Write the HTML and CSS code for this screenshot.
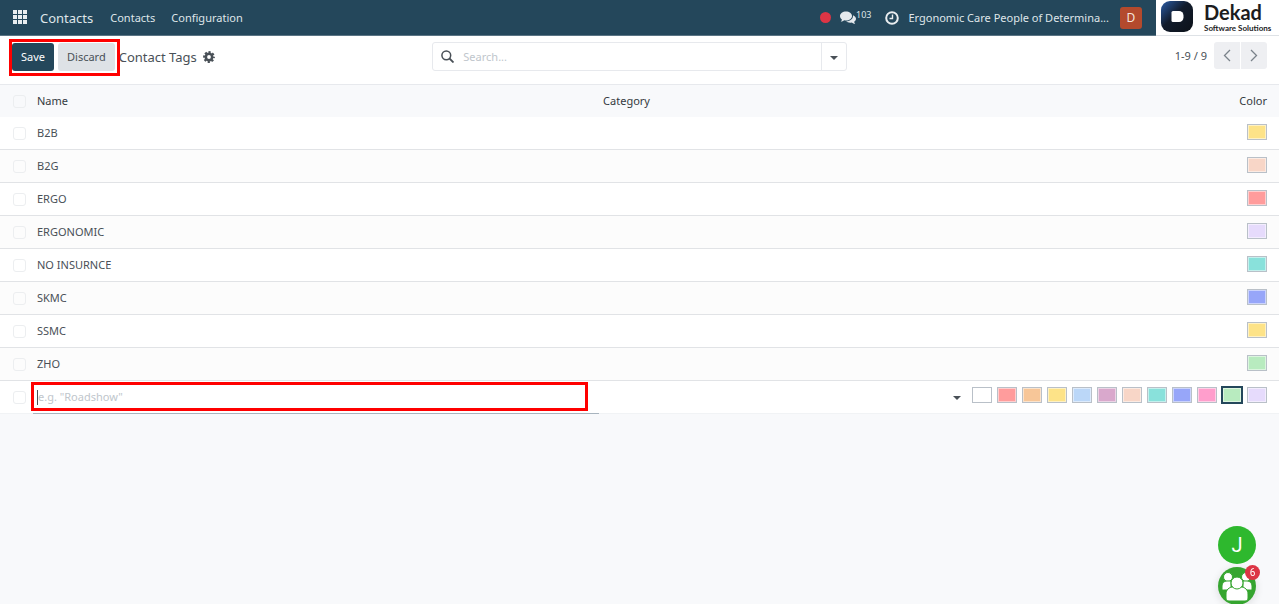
FILE: index.html
```html
<!DOCTYPE html>
<html lang="en">
<head>
    <meta charset="UTF-8">
    <meta name="viewport" content="width=device-width, initial-scale=1.0">
    <title>Contact Tags</title>
    <link rel="stylesheet" href="styles.css">
</head>
<body>
    <header class="navbar">
        <button class="apps" aria-label="Apps">
            <svg width="15" height="15" viewBox="0 0 15 15" fill="#e9edf0"><path d="M0 0h4v4H0zM5 0h4v4H5zM10 0h4v4h-4zM0 5h4v4H0zM5 5h4v4H5zM10 5h4v4h-4zM0 10h4v4H0zM5 10h4v4H5zM10 10h4v4h-4z"/></svg>
        </button>
        <a class="brand" href="#">Contacts</a>
        <nav class="menu">
            <a href="#">Contacts</a>
            <a href="#">Configuration</a>
        </nav>
        <div class="systray">
            <span class="dot"></span>
            <button class="messages" aria-label="Messages">
                <svg width="16" height="14" viewBox="0 0 16 14" fill="#e4e9ed"><path d="M6 0.500C9.300 0.500 12 2.500 12 5S9.300 9.500 6 9.500c-.6 0-1.200-.1-1.700-.2C3.300 10.100 2 10.600.8 10.700c.6-.6 1-1.300 1.100-2.200C.7 7.700 0 6.400 0 5 0 2.500 2.700.5 6 .5z"/><path d="M13 4.300c1.800.7 3 2 3 3.500 0 1.200-.8 2.300-1.900 3 .1.800.5 1.500 1.100 2-1.300 0-2.500-.5-3.400-1.300-.5.100-1 .2-1.600.2-1.700 0-3.200-.5-4.100-1.400C10 10.500 13.300 8 13 4.300z"/></svg>
                <span class="count">103</span>
            </button>
            <button class="activity" aria-label="Activities">
                <svg width="14" height="14" viewBox="0 0 14 14" fill="none" stroke="#e9edf0"><circle cx="7" cy="7" r="5.800" stroke-width="2"/><path d="M7.500 3.500v4H4.500" stroke-width="1.400"/></svg>
            </button>
            <button class="company">Ergonomic Care People of Determina...</button>
            <button class="avatar">D</button>
        </div>
        <a class="logo" href="#">
            <svg width="32" height="31" viewBox="0 0 32 31">
                <defs>
                    <linearGradient id="logo-bg" x1="0" y1="0" x2="1" y2="1">
                        <stop offset="0" stop-color="#2a5da8"/>
                        <stop offset=".45" stop-color="#121c2c"/>
                        <stop offset="1" stop-color="#0c1118"/>
                    </linearGradient>
                </defs>
                <rect width="32" height="31" rx="9" fill="url(#logo-bg)"/>
                <path d="M12 10h6a4.500 4.500 0 0 1 4.500 4.500v2a4.500 4.500 0 0 1-4.500 4.500H12a1.500 1.500 0 0 1-1.500-1.500v-8A1.500 1.500 0 0 1 12 10z" fill="#fff"/>
            </svg>
            <span class="logo-text"><b>Dekad</b><small>Software Solutions</small></span>
        </a>
    </header>

    <section class="control-panel">
        <div class="left">
            <div class="buttons">
                <button class="btn save">Save</button>
                <button class="btn discard">Discard</button>
            </div>
            <h1>Contact Tags</h1>
            <button class="gear" aria-label="Settings">
                <svg width="12" height="12" viewBox="0 0 12 12"><circle cx="6" cy="6" r="3.200" fill="none" stroke="#495057" stroke-width="2.600"/><circle cx="6" cy="6" r="4.900" fill="none" stroke="#495057" stroke-width="2" stroke-dasharray="2.200 1.648" stroke-dashoffset="1.100"/></svg>
            </button>
        </div>
        <div class="search">
            <svg width="13" height="13" viewBox="0 0 13 13" fill="none" stroke="#495057" stroke-width="1.500"><circle cx="5.300" cy="5.300" r="4.400"/><path d="M8.500 8.500l4 4" stroke-width="1.800"/></svg>
            <input type="search" placeholder="Search..." aria-label="Search">
            <button aria-label="Filters"><span class="caret"></span></button>
        </div>
        <div class="pager">
            <span>1-9 / 9</span>
            <button aria-label="Previous"><svg width="8" height="13" viewBox="0 0 8 13"><path d="M7 1L1.500 6.500 7 12"/></svg></button>
            <button aria-label="Next"><svg width="8" height="13" viewBox="0 0 8 13"><path d="M1 1l5.500 5.500L1 12"/></svg></button>
        </div>
    </section>

    <table class="list">
        <thead>
            <tr>
                <th class="check"><input type="checkbox" aria-label="Select all"></th>
                <th>Name</th>
                <th class="category">Category</th>
                <th class="color">Color</th>
            </tr>
        </thead>
        <tbody>
            <tr><td><input type="checkbox" aria-label="B2B"></td><td>B2B</td><td></td><td class="color"><span class="swatch c3"></span></td></tr>
            <tr><td><input type="checkbox" aria-label="B2G"></td><td>B2G</td><td></td><td class="color"><span class="swatch c6"></span></td></tr>
            <tr><td><input type="checkbox" aria-label="ERGO"></td><td>ERGO</td><td></td><td class="color"><span class="swatch c1"></span></td></tr>
            <tr><td><input type="checkbox" aria-label="ERGONOMIC"></td><td>ERGONOMIC</td><td></td><td class="color"><span class="swatch c11"></span></td></tr>
            <tr><td><input type="checkbox" aria-label="NO INSURNCE"></td><td>NO INSURNCE</td><td></td><td class="color"><span class="swatch c7"></span></td></tr>
            <tr><td><input type="checkbox" aria-label="SKMC"></td><td>SKMC</td><td></td><td class="color"><span class="swatch c8"></span></td></tr>
            <tr><td><input type="checkbox" aria-label="SSMC"></td><td>SSMC</td><td></td><td class="color"><span class="swatch c3"></span></td></tr>
            <tr><td><input type="checkbox" aria-label="ZHO"></td><td>ZHO</td><td></td><td class="color"><span class="swatch c10"></span></td></tr>
            <tr class="editing">
                <td><input type="checkbox" aria-label="New tag"></td>
                <td class="name"><input type="text" placeholder='e.g. "Roadshow"' aria-label="Name"></td>
                <td class="select"><button aria-label="Category"><span class="caret"></span></button></td>
                <td class="color">
                    <div class="picker">
                        <button class="swatch c0" aria-label="No color"></button>
                        <button class="swatch c1" aria-label="Red"></button>
                        <button class="swatch c2" aria-label="Orange"></button>
                        <button class="swatch c3" aria-label="Yellow"></button>
                        <button class="swatch c4" aria-label="Light blue"></button>
                        <button class="swatch c5" aria-label="Dark purple"></button>
                        <button class="swatch c6" aria-label="Salmon"></button>
                        <button class="swatch c7" aria-label="Teal"></button>
                        <button class="swatch c8" aria-label="Dark blue"></button>
                        <button class="swatch c9" aria-label="Pink"></button>
                        <button class="swatch c10 selected" aria-label="Green"></button>
                        <button class="swatch c11" aria-label="Purple"></button>
                    </div>
                </td>
            </tr>
        </tbody>
    </table>

    <div class="bubbles">
        <button class="bubble">J</button>
        <button class="bubble group" aria-label="Group chat">
            <svg width="32" height="32" viewBox="0 0 32 32" fill="#fff" stroke="#35a52f" stroke-width="1">
                <circle cx="7" cy="7" r="4.500"/><circle cx="25" cy="7" r="4.500"/>
                <path d="M1 19v-3c0-3 2-5 5-5h4v9H3c-1 0-2 0-2-1zM31 19v-3c0-3-2-5-5-5h-4v9h7c1 0 2 0 2-1z"/>
                <path d="M5 28v-4c0-4 3-7 7-7h8c4 0 7 3 7 7v4c0 2-1 3-3 3H8c-2 0-3-1-3-3z"/>
                <circle cx="16" cy="13" r="6"/>
            </svg>
            <span class="badge">6</span>
        </button>
    </div>
</body>
</html>
```
FILE: styles.css
```css
* {
    box-sizing: border-box;
}
body {
    margin: 0;
    background: #f8f9fb;
    color: #495057;
    font: 11px/18px "Noto Sans", "Open Sans", sans-serif;
}
button {
    padding: 0;
    border: 0;
    background: none;
    color: inherit;
    font: inherit;
}
a {
    color: inherit;
    text-decoration: none;
}
svg {
    display: block;
}

/* top bar */
.navbar {
    display: flex;
    align-items: center;
    height: 36px;
    padding-left: 13px;
    background: #24475b;
    border-bottom: 1px solid #5a7484;
    color: #dfe5e9;
}
.brand {
    margin: 0 17px 0 12px;
    font-size: 13px;
}
.menu {
    display: flex;
    gap: 16px;
}
.systray {
    display: flex;
    align-items: center;
    margin-left: auto;
    margin-right: 14px;
}
.dot {
    width: 11px;
    height: 11px;
    border-radius: 50%;
    background: #dc3545;
    margin-right: 9px;
}
.messages {
    display: flex;
    align-items: center;
    margin-right: 14px;
}
.count {
    font-size: 9px;
    line-height: 12px;
    margin-bottom: 6px;
}
.company {
    margin: 0 11px 0 9px;
}
.avatar {
    width: 22px;
    height: 22px;
    border-radius: 3px;
    background: #b34a2d;
    color: #f3e5df;
    font-size: 12px;
}
.logo {
    display: flex;
    gap: 11px;
    height: 36px;
    width: 123px;
    padding-left: 5px;
    background: #fff;
    border-bottom: 1px solid #dee2e6;
    align-self: flex-start;
    color: #1c1c1e;
    white-space: nowrap;
}
.logo svg {
    margin-top: 1px;
}
.logo-text {
    display: flex;
    flex-direction: column;
    font-family: Lato, sans-serif;
}
.logo-text b {
    font-size: 20px;
    line-height: 24px;
}
.logo-text small {
    font-size: 8px;
    font-weight: bold;
    line-height: 9px;
}

/* control panel */
.control-panel {
    display: grid;
    grid-template-columns: 1fr 1fr 1fr;
    gap: 6px;
    height: 49px;
    padding: 6px 12px 0;
    background: #fff;
    border-bottom: 1px solid #e7e9ed;
}
.left {
    display: flex;
    align-items: center;
    height: 30px;
}
.buttons {
    position: relative;
    display: flex;
    gap: 4px;
}
.buttons::after {
    content: "";
    position: absolute;
    inset: -4px -5px -5px -3px;
    border: 3px solid #f00;
    pointer-events: none;
}
.btn {
    height: 28px;
    padding: 0 9px;
    border-radius: 3px;
}
.save {
    background: #24475b;
    color: #fff;
}
.discard {
    background: #dee2e6;
}
h1 {
    margin: 0 6px 0 4px;
    font-size: 13px;
    font-weight: normal;
}
.search {
    display: flex;
    align-items: center;
    height: 29px;
    padding-left: 8px;
    border: 1px solid #e7e9ed;
    border-radius: 3px;
}
.search input {
    flex: 1;
    min-width: 0;
    padding: 0 9px;
    border: 0;
    outline: 0;
    font: inherit;
}
input::placeholder {
    color: #c0c6cc;
}
.search button {
    align-self: stretch;
    width: 25px;
    border-left: 1px solid #e7e9ed;
}
.caret {
    display: inline-block;
    border: 4px solid transparent;
    border-top-color: #495057;
    border-bottom: 0;
    vertical-align: middle;
}
.pager {
    display: flex;
    justify-content: flex-end;
    gap: 1px;
}
.pager span {
    margin: 5px 6px 0 0;
}
.pager button {
    display: grid;
    place-items: center;
    width: 26px;
    height: 27px;
    border-radius: 3px 0 0 3px;
    background: #eeeff2;
}
.pager button:last-child {
    border-radius: 0 3px 3px 0;
}
.pager path {
    fill: none;
    stroke: #7a828a;
    stroke-width: 1.3;
}

/* tag list */
.list {
    width: 100%;
    table-layout: fixed;
    border-collapse: separate;
    border-spacing: 0;
    background: #fff;
}
.list th, .list td {
    height: 33px;
    padding: 0 4px;
    border-bottom: 1px solid #e1e3e6;
    text-align: left;
    font-weight: normal;
}
.list th {
    height: 32px;
    background: #f8f9fb;
    border-bottom: 0;
    color: #343a40;
}
.list .check {
    width: 33px;
}
.list .category {
    width: 29%;
}
.list .color {
    width: 309px;
    padding: 0 12px 0 0;
    text-align: right;
}
.list td.color {
    padding-bottom: 5px;
}
.list tbody tr:nth-child(even) {
    background: #fcfcfc;
}
.list .editing td {
    border-bottom-color: #f1f3f5;
}
.list input[type="checkbox"] {
    display: block;
    appearance: none;
    width: 13px;
    height: 13px;
    margin: 0 0 0 9px;
    border: 1px solid #eceef0;
    border-radius: 3px;
}
.swatch {
    display: inline-block;
    width: 20px;
    height: 16px;
    border: 1px solid #b9c0c8;
    box-shadow: inset 0 0 0 1px rgba(255, 255, 255, .5);
    vertical-align: middle;
}
.picker {
    display: flex;
    justify-content: flex-end;
    gap: 5px;
}
.selected {
    outline: 2px solid #24475b;
    outline-offset: -1px;
}
.c0 { background: #fff; }
.c1 { background: #ff9c9c; }
.c2 { background: #f7c698; }
.c3 { background: #fde388; }
.c4 { background: #bbd7f8; }
.c5 { background: #d9a8cc; }
.c6 { background: #f8d6c7; }
.c7 { background: #89e1db; }
.c8 { background: #97a6f9; }
.c9 { background: #ff9ecc; }
.c10 { background: #b8ebbf; }
.c11 { background: #e6dbfc; }

.list .editing .name {
    position: relative;
    border-bottom-color: #a8b4be;
}
.name::after {
    content: "";
    position: absolute;
    inset: 1px 11px 2px -2px;
    border: 3px solid #f00;
    pointer-events: none;
}
.name input {
    display: block;
    width: 100%;
    height: 15px;
    padding: 0;
    border: 0;
    border-left: 1px solid #495057;
    outline: 0;
    background: none;
    color: inherit;
    font: inherit;
}
.list .select {
    padding-right: 9px;
    text-align: right;
}

/* chat bubbles */
.bubbles {
    position: fixed;
    right: 23px;
    bottom: -1px;
    display: flex;
    flex-direction: column;
    gap: 3px;
}
.bubble {
    width: 38px;
    height: 38px;
    border-radius: 50%;
    background: #2eb82e;
    color: #fff;
    font: 20px/38px Roboto, sans-serif;
}
.group {
    position: relative;
    display: grid;
    place-items: center;
    background: #35a52f;
    box-shadow: 0 2px 8px rgba(0, 0, 0, .12);
}
.badge {
    position: absolute;
    top: -2px;
    right: -4px;
    width: 15px;
    height: 15px;
    border-radius: 50%;
    background: #dc3545;
    font-size: 10px;
    line-height: 15px;
}
```
